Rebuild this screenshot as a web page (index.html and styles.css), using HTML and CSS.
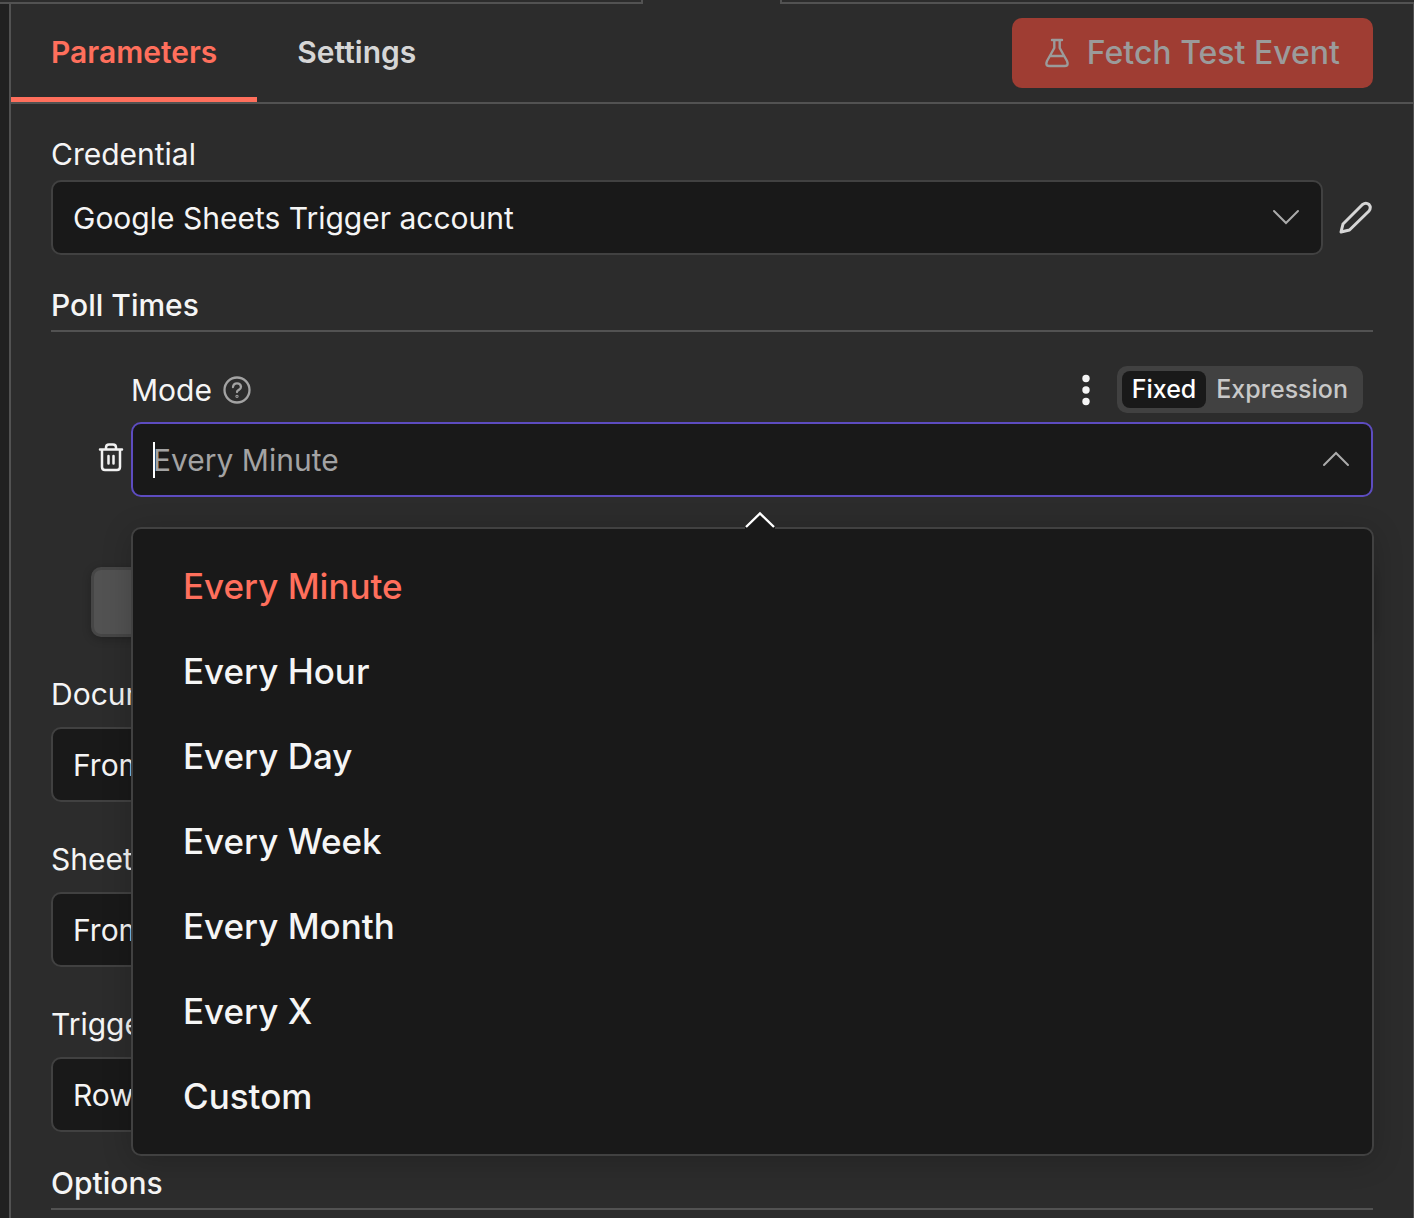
FILE: index.html
```html
<!DOCTYPE html>
<html lang="en">
<head>
<meta charset="utf-8">
<meta name="viewport" content="width=device-width, initial-scale=1">
<title>Google Sheets Trigger</title>
<link rel="stylesheet" href="styles.css">
</head>
<body>
<div class="handle"><span class="handle-left"></span><span class="handle-grip"></span><span class="handle-right"></span></div>
<main class="panel">
  <header class="panel-header">
    <nav class="tabs">
      <a class="tab tab-active" href="#parameters">Parameters</a>
      <a class="tab" href="#settings">Settings</a>
    </nav>
    <button class="fetch" type="button" disabled>
      <svg width="26" height="30" viewBox="0 0 26 30" fill="none" stroke="currentColor" stroke-width="2.400" stroke-linecap="round" stroke-linejoin="round"><path d="M8 2h10M10.300 2v8L3 23q-2 5 2 5h16q4 0 2-5L15.700 10V2M7 18h12"/></svg>
      Fetch Test Event
    </button>
  </header>
  <form class="form" id="parameters">
    <div class="field">
      <label class="label" for="credential">Credential</label>
      <div class="credential-row">
        <div class="select-box">
          <select class="control" id="credential"><option>Google Sheets Trigger account</option></select>
          <svg class="chevron" width="28" height="16" viewBox="0 0 28 16" fill="none" stroke="currentColor" stroke-width="2" stroke-linecap="round"><path d="M2 2l12 12L26 2"/></svg>
        </div>
        <button class="icon-button" type="button" aria-label="Edit credential">
          <svg width="34" height="34" viewBox="0 0 34 34" fill="none" stroke="#d6d6d6" stroke-width="3" stroke-linejoin="round"><path d="M2 31l2-8L23.500 3.500q3.500-2.500 6.500 0 2.500 3 0 6.500L10.500 29z"/></svg>
        </button>
      </div>
    </div>

    <section class="poll">
      <h2 class="heading">Poll Times</h2>
      <div class="poll-item">
        <button class="icon-button trash" type="button" aria-label="Delete poll time">
          <svg width="26" height="30" viewBox="0 0 26 30" fill="none" stroke="#f2f2f2" stroke-width="2.500" stroke-linecap="round" stroke-linejoin="round"><path d="M2 7.500h22M4 8v17q0 3 3 3h12q3 0 3-3V8M8 7V5.500q0-3 3-3h4q3 0 3 3V7M10.500 14v7.500M15.500 14v7.500"/></svg>
        </button>
        <div class="mode">
          <div class="mode-head">
            <label class="label" for="mode">Mode</label>
            <svg class="help" width="28" height="28" viewBox="0 0 28 28" fill="none" stroke="currentColor" stroke-width="2.300" stroke-linecap="round"><circle cx="14" cy="14" r="12.500"/><path d="M10 11q.3-3.700 4-3.700t4 3.500q0 2-2.200 3.100Q14 14.800 14 16"/><circle cx="14" cy="20.300" r=".5"/></svg>
            <button class="icon-button more" type="button" aria-label="Parameter options">
              <svg width="8" height="32" viewBox="0 0 8 32" fill="#f5f5f5"><circle cx="4" cy="4.500" r="3.700"/><circle cx="4" cy="16" r="3.700"/><circle cx="4" cy="27.500" r="3.700"/></svg>
            </button>
            <div class="toggle" role="radiogroup" aria-label="Value type">
              <input class="toggle-input" type="radio" name="kind" id="fixed" checked><label class="toggle-option" for="fixed">Fixed</label>
              <input class="toggle-input" type="radio" name="kind" id="expression"><label class="toggle-option" for="expression">Expression</label>
            </div>
          </div>
          <div class="combo">
            <input class="control control-focus" id="mode" type="text" placeholder="Every Minute" role="combobox" aria-expanded="true" aria-controls="mode-list">
            <span class="caret"></span>
            <svg class="chevron" width="28" height="16" viewBox="0 0 28 16" fill="none" stroke="currentColor" stroke-width="2" stroke-linecap="round"><path d="M2 14L14 2l12 12"/></svg>
            <div class="popup">
              <svg class="popup-arrow" width="32" height="18" viewBox="0 0 32 18"><path d="M1 16L16 1l15 15v2H1z" fill="#191919"/><path d="M2 16L16 2.500l14 13.500" fill="none" stroke="#fff" stroke-width="2.400"/></svg>
              <ul class="options" id="mode-list" role="listbox">
                <li class="option option-selected" role="option" aria-selected="true">Every Minute</li>
                <li class="option" role="option">Every Hour</li>
                <li class="option" role="option">Every Day</li>
                <li class="option" role="option">Every Week</li>
                <li class="option" role="option">Every Month</li>
                <li class="option" role="option">Every X</li>
                <li class="option" role="option">Custom</li>
              </ul>
            </div>
          </div>
        </div>
      </div>
      <button class="add" type="button">Add Poll Time</button>
    </section>

    <div class="field field-spaced">
      <label class="label" for="document">Document</label>
      <select class="control" id="document"><option>From list</option></select>
    </div>
    <div class="field field-spaced">
      <label class="label" for="sheet">Sheet</label>
      <select class="control" id="sheet"><option>From list</option></select>
    </div>
    <div class="field field-spaced">
      <label class="label" for="trigger">Trigger On</label>
      <select class="control" id="trigger"><option>Row Added</option></select>
    </div>
    <h2 class="heading">Options</h2>
  </form>
</main>
</body>
</html>
```
FILE: styles.css
```css
* { box-sizing: border-box; }

body {
  margin: 0;
  min-height: 100vh;
  display: flex;
  flex-direction: column;
  background: #2c2c2c;
  color: #f5f5f5;
  font: 400 30px/40px Inter, sans-serif;
}

button, input, select { font: inherit; color: inherit; }

.handle {
  height: 4px;
  display: grid;
  grid-template-columns: 1fr 137px 1fr;
  padding-left: 9px;
}
.handle-left, .handle-right { border: 0 solid #525252; border-bottom-width: 2px; }
.handle-left { margin-left: -9px; border-right-width: 2px; }
.handle-right { border-left-width: 2px; }

.panel {
  flex: 1;
  margin-left: 9px;
  border-left: 2px solid #525252;
  border-right: 1px solid #525252;
  box-shadow: -9px 0 0 #212121;
}

.panel-header {
  height: 100px;
  display: flex;
  justify-content: space-between;
  align-items: center;
  padding-right: 40px;
  border-bottom: 2px solid #525252;
}
.tabs { display: flex; align-self: stretch; }
.tab {
  padding: 28px 40px 0;
  border-bottom: 5px solid transparent;
  color: #d6d6d6;
  font-weight: 600;
  text-decoration: none;
}
.tab-active { color: #ff6f5c; border-color: #ff6f5c; }

.fetch {
  height: 70px;
  display: flex;
  align-items: center;
  gap: 17px;
  padding: 0 33px 0 32px;
  border: 0;
  border-radius: 10px;
  background: #9f3d33;
  color: #9b9b9b;
  font-size: 32px;
  font-weight: 500;
}

.form { padding: 30px 40px 8px; }
.label { display: block; }
.field .label { margin-bottom: 6px; }
.field-spaced { margin-bottom: 37px; }
.field-spaced .label { margin-bottom: 13px; }
.field-spaced + .heading { margin-top: -6px; }

.credential-row { display: flex; align-items: center; gap: 16px; }
.select-box { flex: 1; position: relative; }

.control {
  display: block;
  width: 100%;
  height: 75px;
  padding: 0 20px;
  border: 2px solid #414141;
  border-radius: 10px;
  background: #191919;
  appearance: none;
  outline: 0;
}
.control-focus { border-color: #5d4cc0; }
.control::placeholder { color: #a3a3a3; opacity: 1; }

.chevron { position: absolute; right: 23px; top: 29px; color: #ababab; }

.icon-button { display: flex; padding: 0; border: 0; background: none; }

.poll { margin: 30px 0 37px; }
.heading {
  margin: 0;
  padding-bottom: 5px;
  border-bottom: 2px solid #525252;
  font-size: 30px;
  font-weight: 500;
  line-height: 40px;
}

.poll-item { display: flex; align-items: flex-end; gap: 7px; padding: 34px 0 0 47px; }
.trash { margin-bottom: 25px; }
.mode { flex: 1; }
.mode-head { display: flex; align-items: center; padding-right: 10px; margin-bottom: 9px; }
.help { margin-left: 11px; color: #a3a3a3; }
.more { margin-left: auto; }

.toggle {
  height: 47px;
  display: flex;
  margin-left: 27px;
  padding: 5px;
  border-radius: 10px;
  background: #414141;
  font-size: 25px;
  font-weight: 500;
  line-height: 37px;
}
.toggle-input { position: absolute; opacity: 0; }
.toggle-option { padding: 0 10px; border-radius: 8px; color: #c8c8c8; }
.toggle-input:checked + .toggle-option { background: #191919; color: #fff; }

.combo { position: relative; }
.caret { position: absolute; left: 22px; top: 20px; width: 2px; height: 36px; background: #fff; }

.popup {
  position: absolute;
  z-index: 1;
  top: 105px;
  left: 0;
  right: -1px;
  border: 2px solid #414141;
  border-radius: 10px;
  background: #191919;
  box-shadow: 0 5px 30px rgba(0, 0, 0, .2);
}
.popup-arrow { position: absolute; left: 50%; top: -18px; margin-left: -9px; }
.options { margin: 0; padding: 15px 0; list-style: none; }
.option { padding: 0 50px; font-size: 35px; font-weight: 500; line-height: 85px; }
.option-selected { color: #ff6f5c; }

.add {
  display: block;
  width: calc(100% - 40px);
  height: 70px;
  margin: 70px 0 0 40px;
  border: 3px solid #464646;
  border-radius: 10px;
  background: #525252;
  box-shadow: 0 2px 8px rgba(0, 0, 0, .25);
}
```
